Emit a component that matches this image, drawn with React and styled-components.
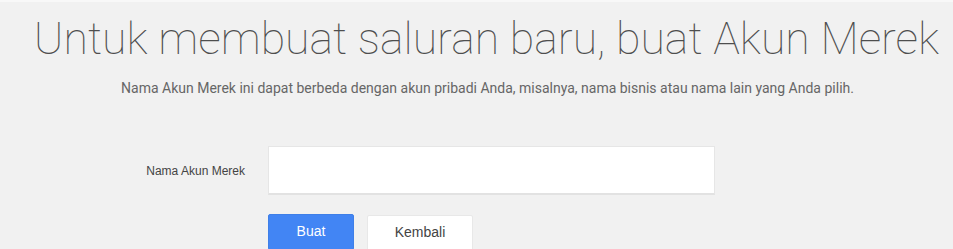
import styled, { createGlobalStyle } from 'styled-components';

const GlobalStyle = createGlobalStyle`
    html, body {
        margin: 0;
        padding: 0;
        background-color: #f1f1f1;
    }
`

const Page = styled.div`
    width: 953px;
    height: 249px;
    overflow: hidden;
    background-color: #f1f1f1;
    border-top: 2px solid #f8f8f8;
    box-sizing: border-box;
`

const Title = styled.h1`
    margin: 0;
    padding-top: 10px;
    padding-left: 20px;
    text-align: center;
    font-family: Roboto, "Liberation Sans", sans-serif;
    font-weight: 100;
    font-size: 44.6px;
    line-height: 54px;
    color: #4e4e4e;
    white-space: nowrap;
`

const Subtitle = styled.p`
    margin: 14px 0 0;
    padding-left: 22px;
    text-align: center;
    font-family: Roboto, "Liberation Sans", sans-serif;
    font-size: 14px;
    line-height: 16px;
    color: #666666;
    white-space: nowrap;
`

const Form = styled.div`
    display: flex;
    flex-direction: column;
    gap: 19px;
    margin-top: 50px;
`

const Row = styled.div`
    display: flex;
    align-items: center;
    gap: 23px;
`

const Label = styled.label`
    width: 245px;
    text-align: right;
    font-family: "Liberation Sans", Arial, sans-serif;
    font-size: 12px;
    color: #444444;
`

const Input = styled.input`
    width: 447px;
    height: 49px;
    box-sizing: border-box;
    border: 1px solid #e6e6e6;
    border-bottom: 2px solid #e2e2e2;
    background: #ffffff;
    outline: none;
    padding: 0 12px;
    font-family: "Liberation Sans", Arial, sans-serif;
    font-size: 14px;
`

const Buttons = styled.div`
    display: flex;
    gap: 13px;
    padding-left: 268px;
`

const Button = styled.button`
    height: 36px;
    width: ${(props) => `${props.width}px`};
    box-sizing: border-box;
    border: ${(props) => (props.primary ? '1px solid #3f7fe8' : '1px solid #e8e8e8')};
    border-radius: 2px;
    background-color: ${(props) => (props.primary ? '#4285f4' : '#ffffff')};
    color: ${(props) => (props.primary ? '#ffffff' : '#444444')};
    font-family: "Liberation Sans", Arial, sans-serif;
    font-size: 14px;
    padding: 0 0 3px;
    margin-top: ${(props) => (props.primary ? '0' : '1px')};
    cursor: pointer;
`

const App = () => {
    return (
        <>
            <GlobalStyle />
            <Page>
                <Title>Untuk membuat saluran baru, buat Akun Merek</Title>
                <Subtitle>
                    Nama Akun Merek ini dapat berbeda dengan akun pribadi Anda, misalnya, nama bisnis atau nama lain yang Anda pilih.
                </Subtitle>
                <Form>
                    <Row>
                        <Label>Nama Akun Merek</Label>
                        <Input type="text" />
                    </Row>
                    <Buttons>
                        <Button primary width={86}>Buat</Button>
                        <Button width={106}>Kembali</Button>
                    </Buttons>
                </Form>
            </Page>
        </>
    )
}

export default App
